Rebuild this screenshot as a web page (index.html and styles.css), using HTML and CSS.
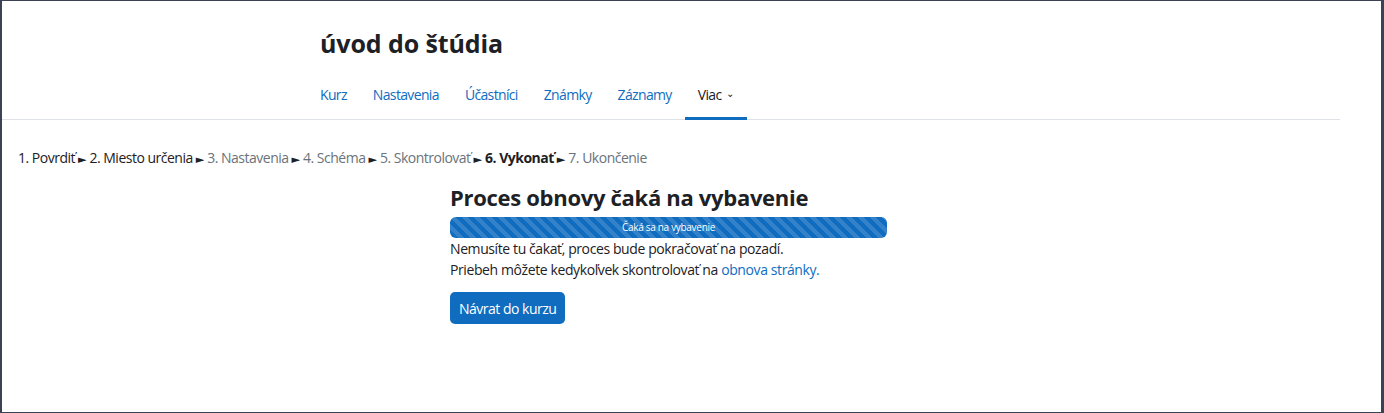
FILE: index.html
```html
<!DOCTYPE html>
<html lang="sk">
<head>
    <meta charset="UTF-8">
    <title>úvod do štúdia: Obnova</title>
    <link rel="stylesheet" href="styles.css">
</head>
<body>
    <div id="page">
        <header class="page-header">
            <div class="header-inner">
                <h1>úvod do štúdia</h1>
                <nav class="course-nav">
                    <a href="#">Kurz</a>
                    <a href="#">Nastavenia</a>
                    <a href="#">Účastníci</a>
                    <a href="#">Známky</a>
                    <a href="#">Záznamy</a>
                    <a href="#" class="active">Viac <span class="caret">&#8964;</span></a>
                </nav>
            </div>
        </header>

        <div class="steps">
            <span class="done">1. Povrdiť</span><span class="sep">&#9658;</span><span class="done">2. Miesto určenia</span><span class="sep">&#9658;</span><span class="todo">3. Nastavenia</span><span class="sep">&#9658;</span><span class="todo">4. Schéma</span><span class="sep">&#9658;</span><span class="todo">5. Skontrolovať</span><span class="sep">&#9658;</span><span class="current">6. Vykonať</span><span class="sep">&#9658;</span><span class="todo">7. Ukončenie</span>
        </div>

        <div id="restore-container">
            <h2>Proces obnovy čaká na vybavenie</h2>
            <div class="progress">
                <div class="progress-bar">Čaká sa na vybavenie</div>
            </div>
            <p>Nemusíte tu čakať, proces bude pokračovať na pozadí.</p>
            <p>Priebeh môžete kedykoľvek skontrolovať na <a href="#">obnova stránky.</a></p>
            <div class="button-container">
                <button>Návrat do kurzu</button>
            </div>
        </div>
    </div>
</body>
</html>
```

FILE: styles.css
```css
html,
body {
    height: 100%;
}

body {
    font-family: "Open Sans", Arial, sans-serif;
    font-size: 14px;
    letter-spacing: -0.4px;
    margin: 0;
    padding: 0;
    background-color: #3b4254;
    color: #1d2125;
}

#page {
    box-sizing: border-box;
    height: 411px;
    margin: 1px 3px 0 2px;
    background-color: #fff;
    padding-right: 41px;
}

/* Hlavička kurzu */
.page-header {
    border-bottom: 1px solid #dee2e6;
}

.header-inner {
    width: 700px;
    margin-left: calc(50% - 351px);
}

.page-header h1 {
    margin: 0;
    padding: 24px 0 0 0;
    font-size: 25px;
    line-height: 36px;
    font-weight: 700;
    letter-spacing: -0.1px;
}

.course-nav {
    display: flex;
    margin: 22px 0 -1px -13px;
}

.course-nav a {
    display: block;
    padding: 0 13px;
    height: 34px;
    line-height: 24px;
    color: #0f6cbf;
    text-decoration: none;
    letter-spacing: -0.65px;
    border-bottom: 3px solid transparent;
}

.course-nav a.active {
    color: #1d2125;
    border-bottom-color: #0f6cbf;
}

.caret {
    font-size: 10px;
    margin-left: 2px;
    position: relative;
    top: -3px;
}

/* Kroky obnovy */
.steps {
    padding: 27px 0 0 16px;
    line-height: 22px;
    letter-spacing: -0.5px;
}

.steps .done,
.steps .sep {
    color: #1d2125;
}

.steps .sep {
    font-family: "DejaVu Sans", sans-serif;
    font-size: 11px;
    letter-spacing: 0;
    margin: 0 3px;
}

.steps .todo {
    color: #6a737b;
}

.steps .current {
    font-weight: 700;
}

/* Stav obnovy */
#restore-container {
    width: 437px;
    margin-left: calc(50% - 221px);
}

#restore-container h2 {
    margin: 10px 0 4px 0;
    font-size: 22px;
    line-height: 32px;
    font-weight: 700;
    letter-spacing: -0.3px;
}

.progress {
    height: 21px;
    border-radius: 6px;
    overflow: hidden;
}

.progress-bar {
    height: 100%;
    background-color: #0f6cbf;
    background-image: linear-gradient(45deg, rgba(255, 255, 255, .15) 25%, transparent 25%, transparent 50%, rgba(255, 255, 255, .15) 50%, rgba(255, 255, 255, .15) 75%, transparent 75%, transparent);
    background-size: 12px 12px;
    color: #fff;
    font-size: 10px;
    letter-spacing: -0.3px;
    line-height: 21px;
    text-align: center;
}

#restore-container p {
    margin: 0;
    line-height: 21px;
}

#restore-container a {
    color: #0f6cbf;
    text-decoration: none;
}

.button-container {
    margin-top: 12px;
}

.button-container button {
    font-family: inherit;
    font-size: 14px;
    letter-spacing: -0.5px;
    padding: 0 9px;
    height: 32px;
    cursor: pointer;
    background-color: #0f6cbf;
    color: #fff;
    border: none;
    border-radius: 5px;
}
```
